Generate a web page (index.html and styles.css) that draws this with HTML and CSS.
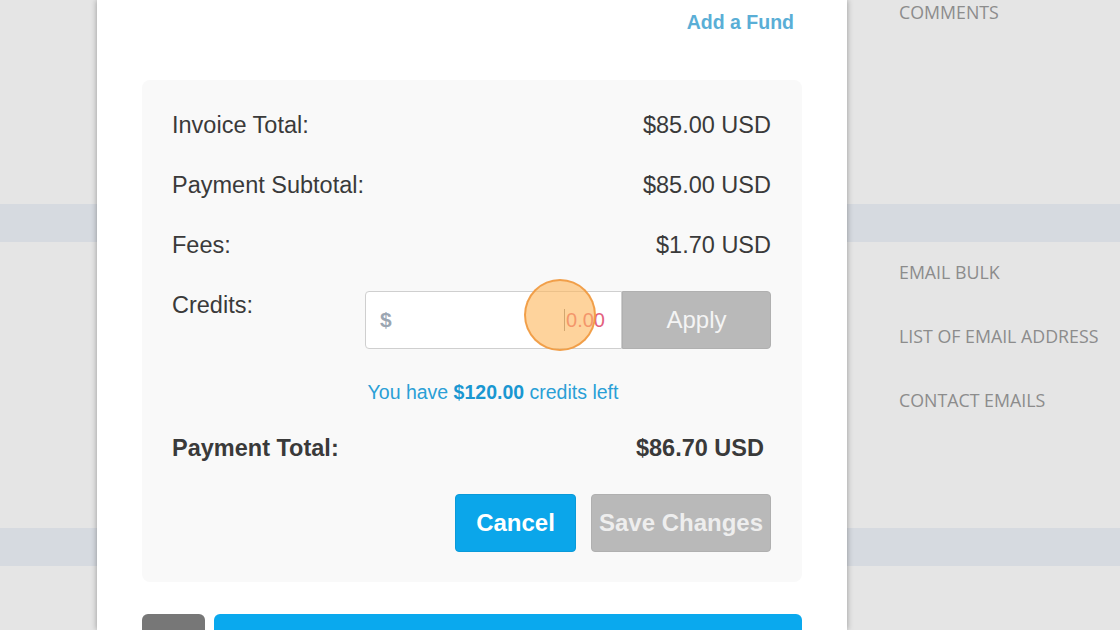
FILE: index.html
```html
<!DOCTYPE html>
<html>
<head>
<meta charset="utf-8">
<link rel="stylesheet" href="styles.css">
</head>
<body>
<div class="page">
  <div class="gutter"></div>
  <div class="modal">
    <div class="modal-head"><a class="add-fund">Add a Fund</a></div>
    <div class="panel">
      <div class="row"><span>Invoice Total:</span><span>$85.00 USD</span></div>
      <div class="row"><span>Payment Subtotal:</span><span>$85.00 USD</span></div>
      <div class="row"><span>Fees:</span><span>$1.70 USD</span></div>
      <div class="row credits">
        <span>Credits:</span>
        <div class="credit-box">
          <div class="input-group">
            <div class="field">
              <span class="dollar">$</span>
              <span class="ph"><span class="caret"></span>0.00</span>
              <span class="click"></span>
            </div>
            <div class="apply">Apply</div>
          </div>
          <div class="note">You have <b>$120.00</b> credits left</div>
        </div>
      </div>
      <div class="row total"><span>Payment Total:</span><span>$86.70 USD</span></div>
      <div class="actions">
        <div class="btn btn-blue">Cancel</div>
        <div class="btn btn-grey">Save Changes</div>
      </div>
    </div>
    <div class="bottom">
      <div class="b-grey"></div>
      <div class="b-blue"></div>
    </div>
  </div>
  <div class="sidebar">
    <div class="side-item first">COMMENTS</div>
    <div class="side-item">EMAIL BULK</div>
    <div class="side-item">LIST OF EMAIL ADDRESS</div>
    <div class="side-item">CONTACT EMAILS</div>
  </div>
</div>
</body>
</html>
```
FILE: styles.css
```css
html, body {
  margin: 0;
  padding: 0;
}
body {
  width: 1120px;
  height: 630px;
  overflow: hidden;
  font-family: "Liberation Sans", Arial, sans-serif;
  background: linear-gradient(to bottom,
    #e5e5e5 0, #e5e5e5 204px,
    #d6dae0 204px, #d6dae0 242px,
    #e5e5e5 242px, #e5e5e5 528px,
    #d6dae0 528px, #d6dae0 566px,
    #e5e5e5 566px);
}
.page {
  display: flex;
  height: 630px;
}
.gutter {
  width: 97px;
  flex: none;
}
.modal {
  width: 750px;
  flex: none;
  height: 630px;
  background: #fff;
  box-shadow: 0 0 6px rgba(0,0,0,0.35);
  padding: 0 45px;
  box-sizing: border-box;
  display: flex;
  flex-direction: column;
}
.modal-head {
  height: 80px;
  display: flex;
  justify-content: flex-end;
  align-items: flex-start;
  padding-right: 8px;
}
.add-fund {
  font-weight: bold;
  font-size: 19.5px;
  line-height: 44px;
  color: #5aaed6;
}
.panel {
  background: #f9f9f9;
  border-radius: 8px;
  height: 502px;
  box-sizing: border-box;
  padding: 30px 31px 30px 30px;
  display: flex;
  flex-direction: column;
  color: #3a3a3a;
  font-size: 23.5px;
}
.row {
  display: flex;
  justify-content: space-between;
  align-items: flex-start;
  line-height: 30px;
  margin-bottom: 30px;
}
.row.credits {
  margin-bottom: 29px;
}
.credit-box {
  display: flex;
  flex-direction: column;
  width: 406px;
}
.input-group {
  display: flex;
  height: 58px;
  margin-top: 1px;
}
.field {
  position: relative;
  width: 257px;
  box-sizing: border-box;
  border: 1px solid #cfcfcf;
  border-radius: 4px 0 0 4px;
  background: #fff;
  display: flex;
  justify-content: space-between;
  align-items: center;
  padding: 0 16px 0 14px;
}
.dollar {
  color: #9ba6b2;
  font-size: 21px;
  font-weight: bold;
}
.ph {
  color: #e3607e;
  font-size: 20px;
  display: flex;
  align-items: center;
}
.caret {
  width: 1px;
  height: 22px;
  background: #8a8a8a;
  margin-right: 1px;
}
.click {
  position: absolute;
  left: 158px;
  top: -13px;
  width: 68px;
  height: 68px;
  border-radius: 50%;
  background: rgba(253, 184, 96, 0.62);
  border: 2px solid rgba(240, 150, 60, 0.85);
}
.apply {
  flex: 1;
  box-sizing: border-box;
  background: #b9b9b9;
  border-radius: 0 4px 4px 0;
  color: #f4f4f4;
  display: flex;
  align-items: center;
  justify-content: center;
  font-size: 24px;
  border: 1px solid #b0b0b0;
}
.note {
  width: 256px;
  text-align: center;
  font-size: 19.5px;
  line-height: 24px;
  color: #2a9fd6;
  margin-top: 31px;
  white-space: nowrap;
}
.note b {
  color: #1a97d1;
}
.row.total {
  font-weight: bold;
  padding-right: 7px;
  margin-bottom: 31px;
}
.actions {
  display: flex;
  justify-content: flex-end;
  gap: 15px;
}
.btn {
  height: 58px;
  border-radius: 4px;
  display: flex;
  align-items: center;
  justify-content: center;
  font-weight: bold;
  font-size: 24px;
  box-sizing: border-box;
}
.btn-blue {
  width: 121px;
  background: #0ba6ea;
  color: #fff;
  border: 1px solid #0a9ad9;
}
.btn-grey {
  width: 180px;
  background: #b9b9b9;
  color: #eeeeee;
  border: 1px solid #b0b0b0;
}
.bottom {
  display: flex;
  gap: 9px;
  margin-top: 32px;
  flex: 1;
}
.b-grey {
  width: 63px;
  background: #777;
  border-radius: 6px 6px 0 0;
}
.b-blue {
  flex: 1;
  background: #0aa9ee;
  border-radius: 6px 6px 0 0;
}
.sidebar {
  padding-left: 52px;
  font-family: "Open Sans", sans-serif;
  font-size: 17.8px;
  color: #8c8c8c;
  display: flex;
  flex-direction: column;
}
.side-item {
  line-height: 24px;
  margin-bottom: 40px;
  white-space: nowrap;
}
.side-item.first {
  margin-bottom: 236px;
}
```
